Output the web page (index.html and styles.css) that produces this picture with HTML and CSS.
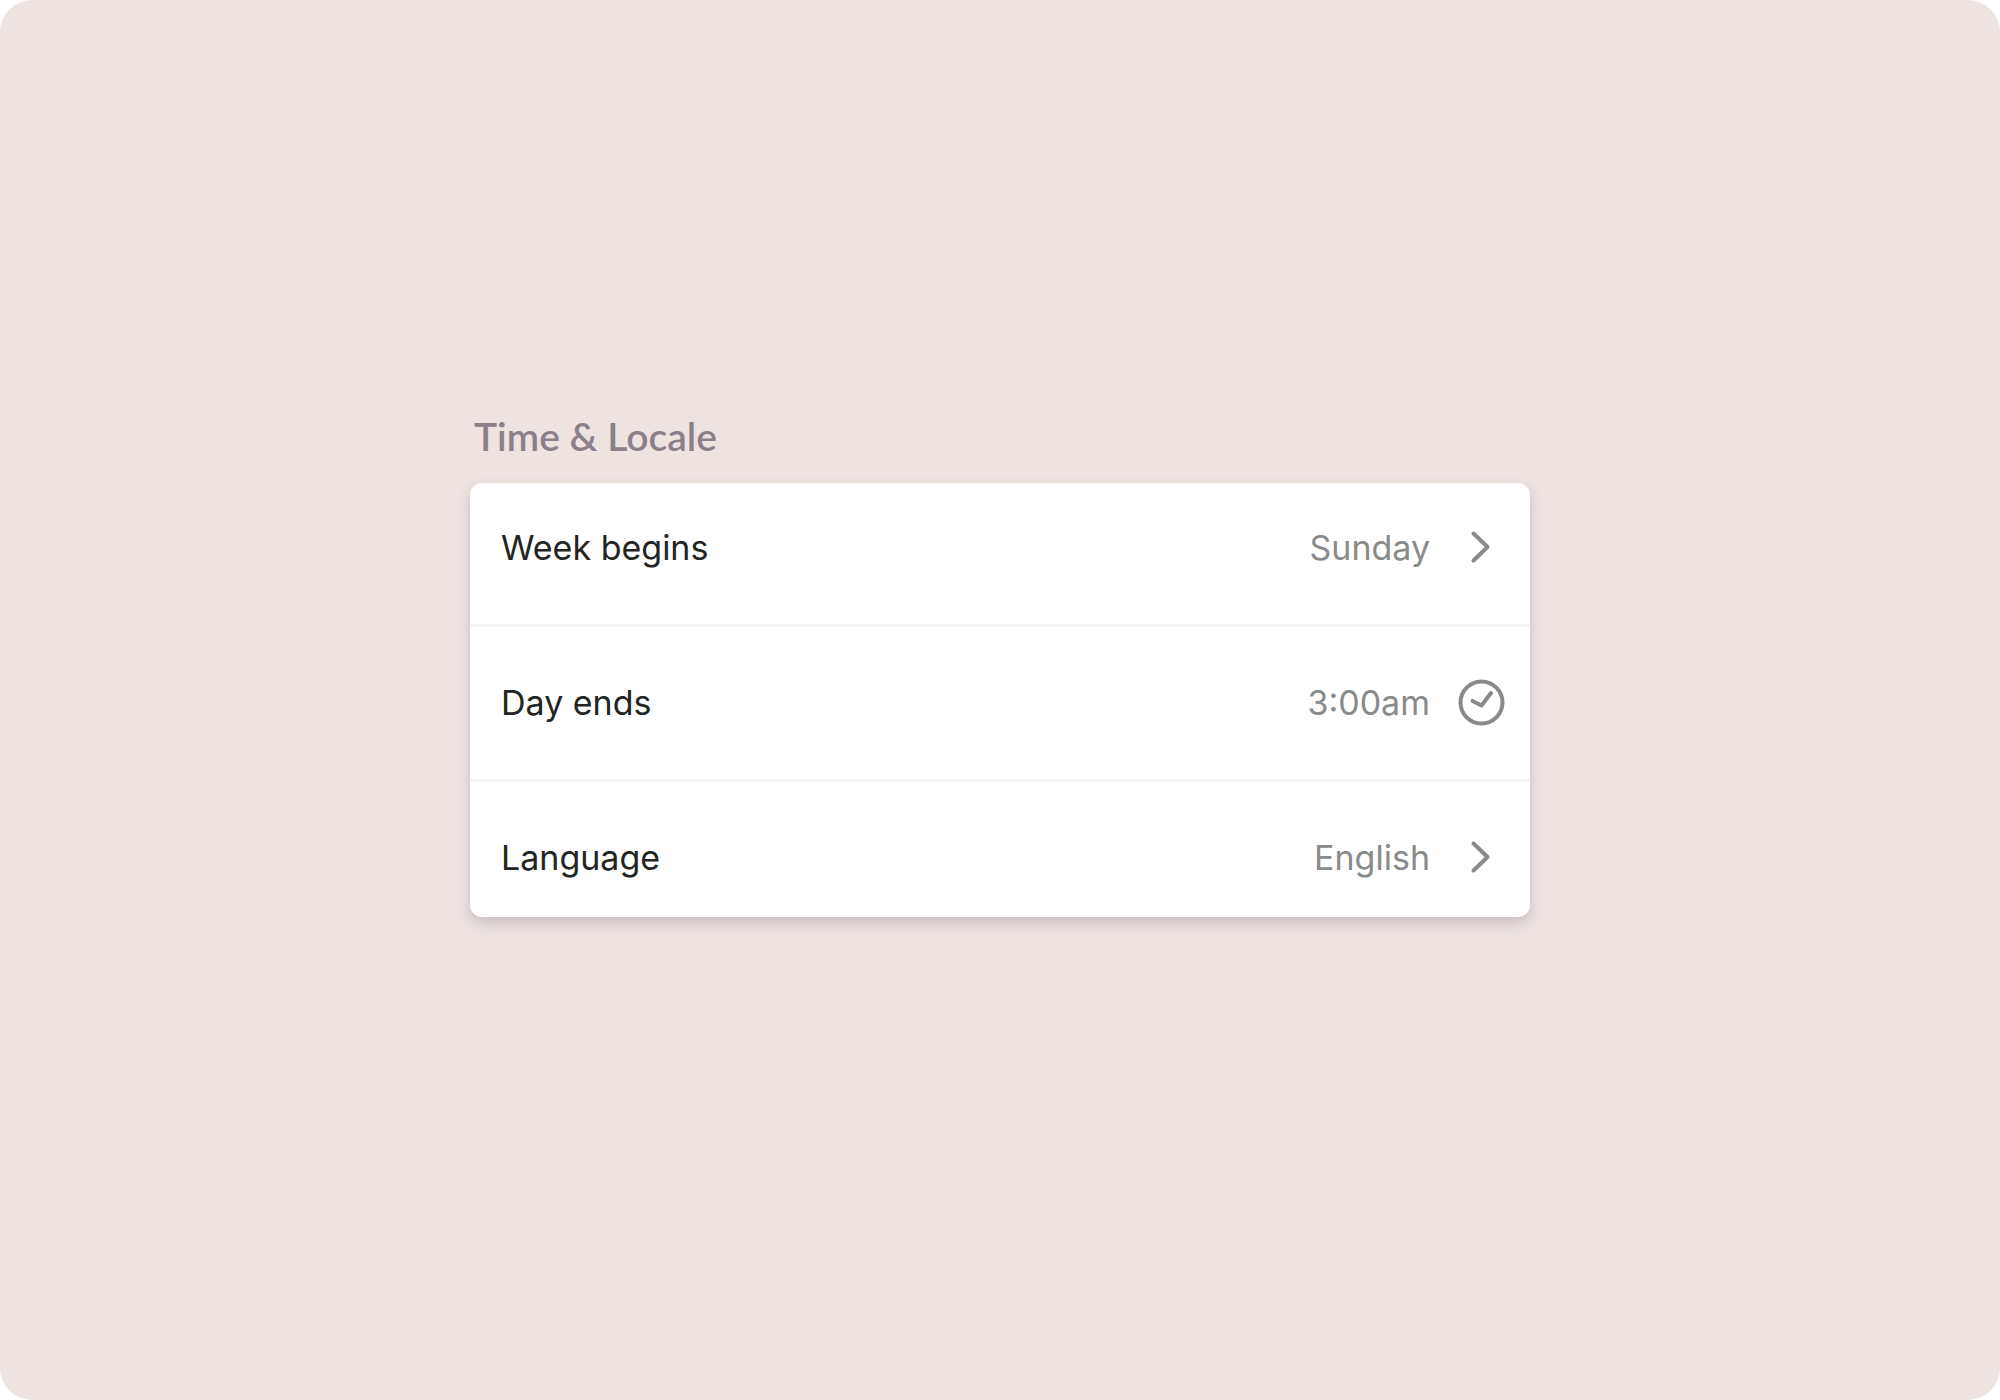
FILE: index.html
```
<!DOCTYPE html>
<html lang="en">
<head>
    <meta charset="UTF-8">
    <meta name="viewport" content="width=device-width, initial-scale=1.0">
    <title>Time &amp; Locale</title>
    <link rel="stylesheet" href="styles.css">
</head>
<body>
    <main class="page">
        <section class="settings">
            <h2>Time &amp; Locale</h2>
            <div class="card">
                <button type="button" class="row">
                    <span class="label">Week begins</span>
                    <span class="value">Sunday</span>
                    <svg class="icon" viewBox="0 0 48 48" aria-hidden="true">
                        <path d="M15.5 9.5 L29.5 23 L15.5 36.5"/>
                    </svg>
                </button>
                <button type="button" class="row">
                    <span class="label">Day ends</span>
                    <span class="value">3:00am</span>
                    <svg class="icon" viewBox="0 0 48 48" aria-hidden="true">
                        <circle cx="23.5" cy="23.5" r="21"/>
                        <path d="M14.5 22 L23.5 26.5 L33 14"/>
                    </svg>
                </button>
                <button type="button" class="row">
                    <span class="label">Language</span>
                    <span class="value">English</span>
                    <svg class="icon" viewBox="0 0 48 48" aria-hidden="true">
                        <path d="M15.5 9.5 L29.5 23 L15.5 36.5"/>
                    </svg>
                </button>
            </div>
        </section>
    </main>
</body>
</html>
```

FILE: styles.css
```
* {
    box-sizing: border-box;
}
body {
    margin: 0;
    background: white;
    font-family: Inter, "Liberation Sans", sans-serif;
}
.page {
    min-height: 100vh;
    display: flex;
    justify-content: center;
    align-items: center;
    padding-bottom: 72px;
    background: #ede4e2;
    border-radius: 32px;
}
.settings {
    width: 53%;
}
h2 {
    margin: 0 4px 23px;
    font-family: Lato, sans-serif;
    font-size: 39px;
    line-height: 48px;
    font-weight: 600;
    color: #8b7f8a;
}
.card {
    background: white;
    border-radius: 12px;
    box-shadow: 0 6px 14px rgba(70, 50, 65, 0.22);
    overflow: hidden;
}
.row {
    display: flex;
    align-items: center;
    width: 100%;
    padding: 52px 24px 52px 31px;
    border: none;
    border-bottom: 3px solid #f3f4f4;
    background: none;
    font-family: inherit;
    font-size: 34px;
    line-height: 44px;
    color: #222524;
    text-align: left;
    cursor: pointer;
}
.row:first-child {
    padding-top: 41px;
}
.row:last-child {
    padding-bottom: 35px;
    border-bottom: none;
}
.label {
    flex: 1;
}
.value {
    margin-right: 28px;
    color: #888b8a;
}
.icon {
    width: 48px;
    height: 48px;
    fill: none;
    stroke: #888b8a;
    stroke-width: 4;
    stroke-linecap: round;
    stroke-linejoin: round;
}
```
